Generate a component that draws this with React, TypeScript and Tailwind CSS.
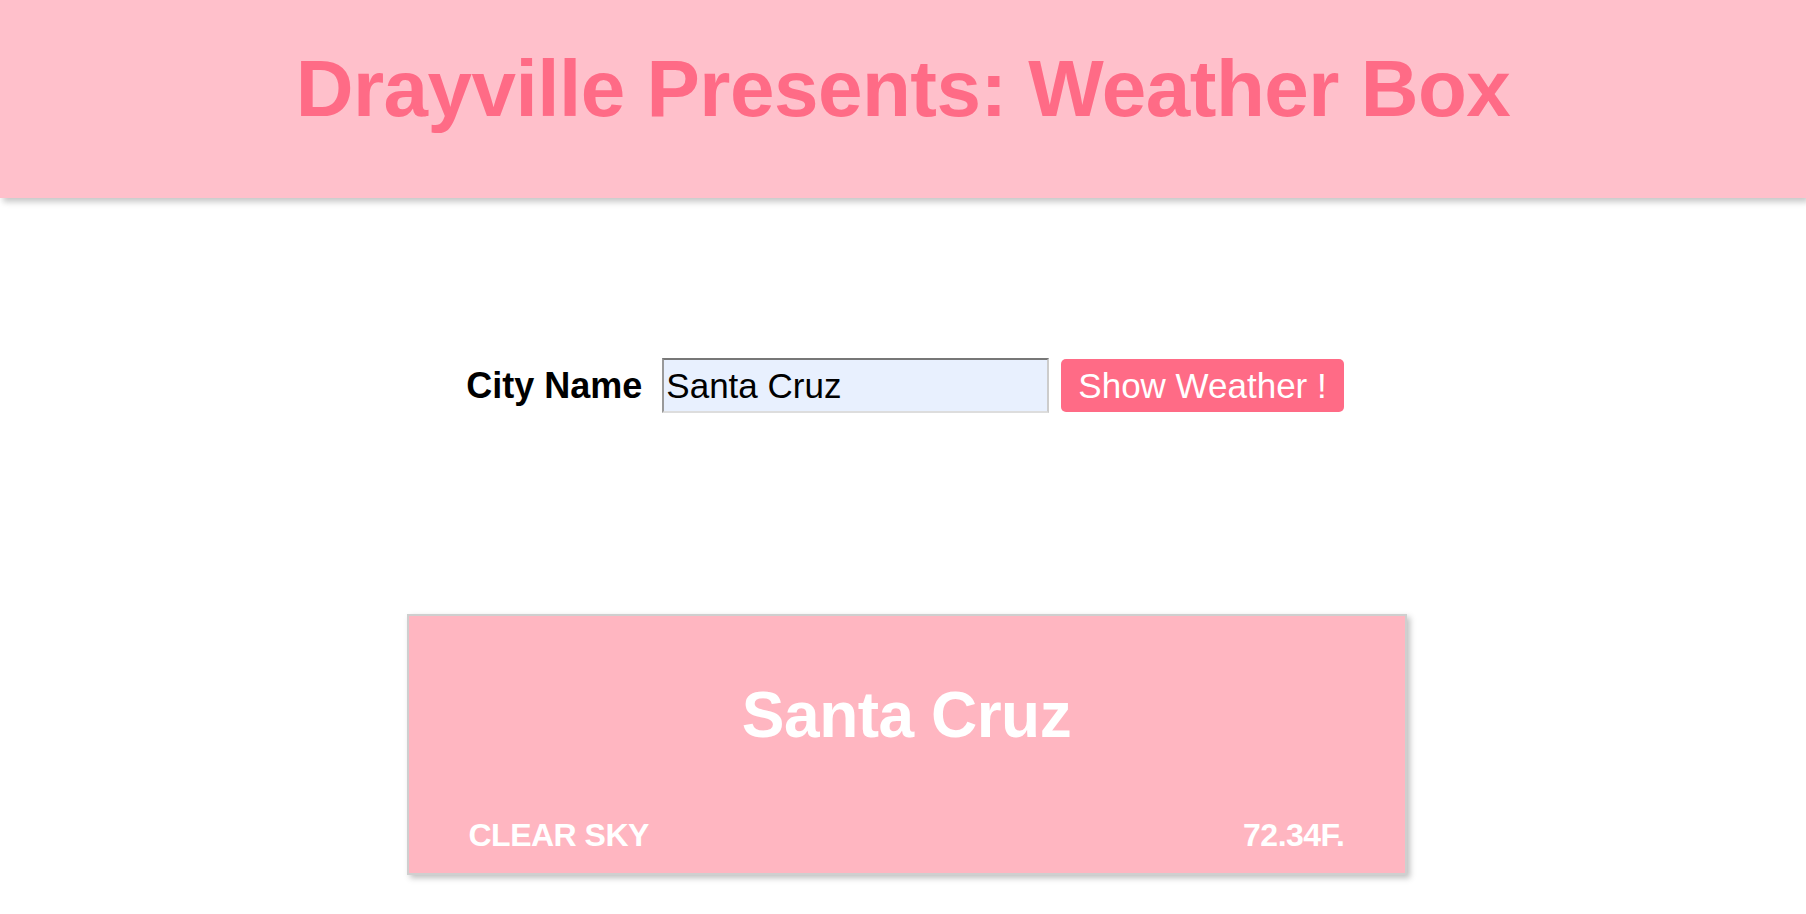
import React from 'react';

export default function App() {
  return (
    <div className="min-h-screen bg-white" style={{ fontFamily: '"Liberation Sans", Arial, sans-serif' }}>
      {/* Header */}
      <header className="h-[198px] bg-[#ffc0cb] pt-[44px] shadow-[3px_4px_6px_rgba(0,0,0,0.22)]">
        <h1 className="text-center text-[80px] leading-[90px] font-bold tracking-[-0.5px] text-[#ff6b86]">
          Drayville Presents: Weather Box
        </h1>
      </header>

      {/* Search form */}
      <div className="mt-[160px] flex items-center justify-center pl-[4px]">
        <label className="text-[36px] leading-[40px] font-bold text-black">City Name</label>
        <input
          className="ml-[20px] h-[55px] w-[387px] border-2 border-t-[#777777] border-l-[#999999] border-r-[#cccccc] border-b-[#dddddd] bg-[#e8f0fe] pl-[2px] text-[35px] text-black outline-none"
          defaultValue="Santa Cruz"
        />
        <button className="ml-[12px] h-[53px] rounded-[5px] bg-[#ff6b86] px-[17px] text-[35px] leading-[40px] text-white">
          Show Weather !
        </button>
      </div>

      {/* Weather card */}
      <div className="mt-[201px] flex justify-center pl-[7px]">
        <div className="w-[1000px] border-2 border-[#cfcfcf] bg-[#ffb6c1] px-[60px] pt-[63px] pb-[20px] shadow-[3px_3px_6px_rgba(0,0,0,0.25)]">
          <h2 className="text-center text-[64px] leading-[72px] font-bold tracking-[-0.5px] text-white">Santa Cruz</h2>
          <div className="mt-[66px] flex items-center justify-between text-[32px] leading-[36px] font-bold tracking-[-0.5px] text-white uppercase">
            <span>Clear Sky</span>
            <span>72.34F.</span>
          </div>
        </div>
      </div>
    </div>
  );
}
